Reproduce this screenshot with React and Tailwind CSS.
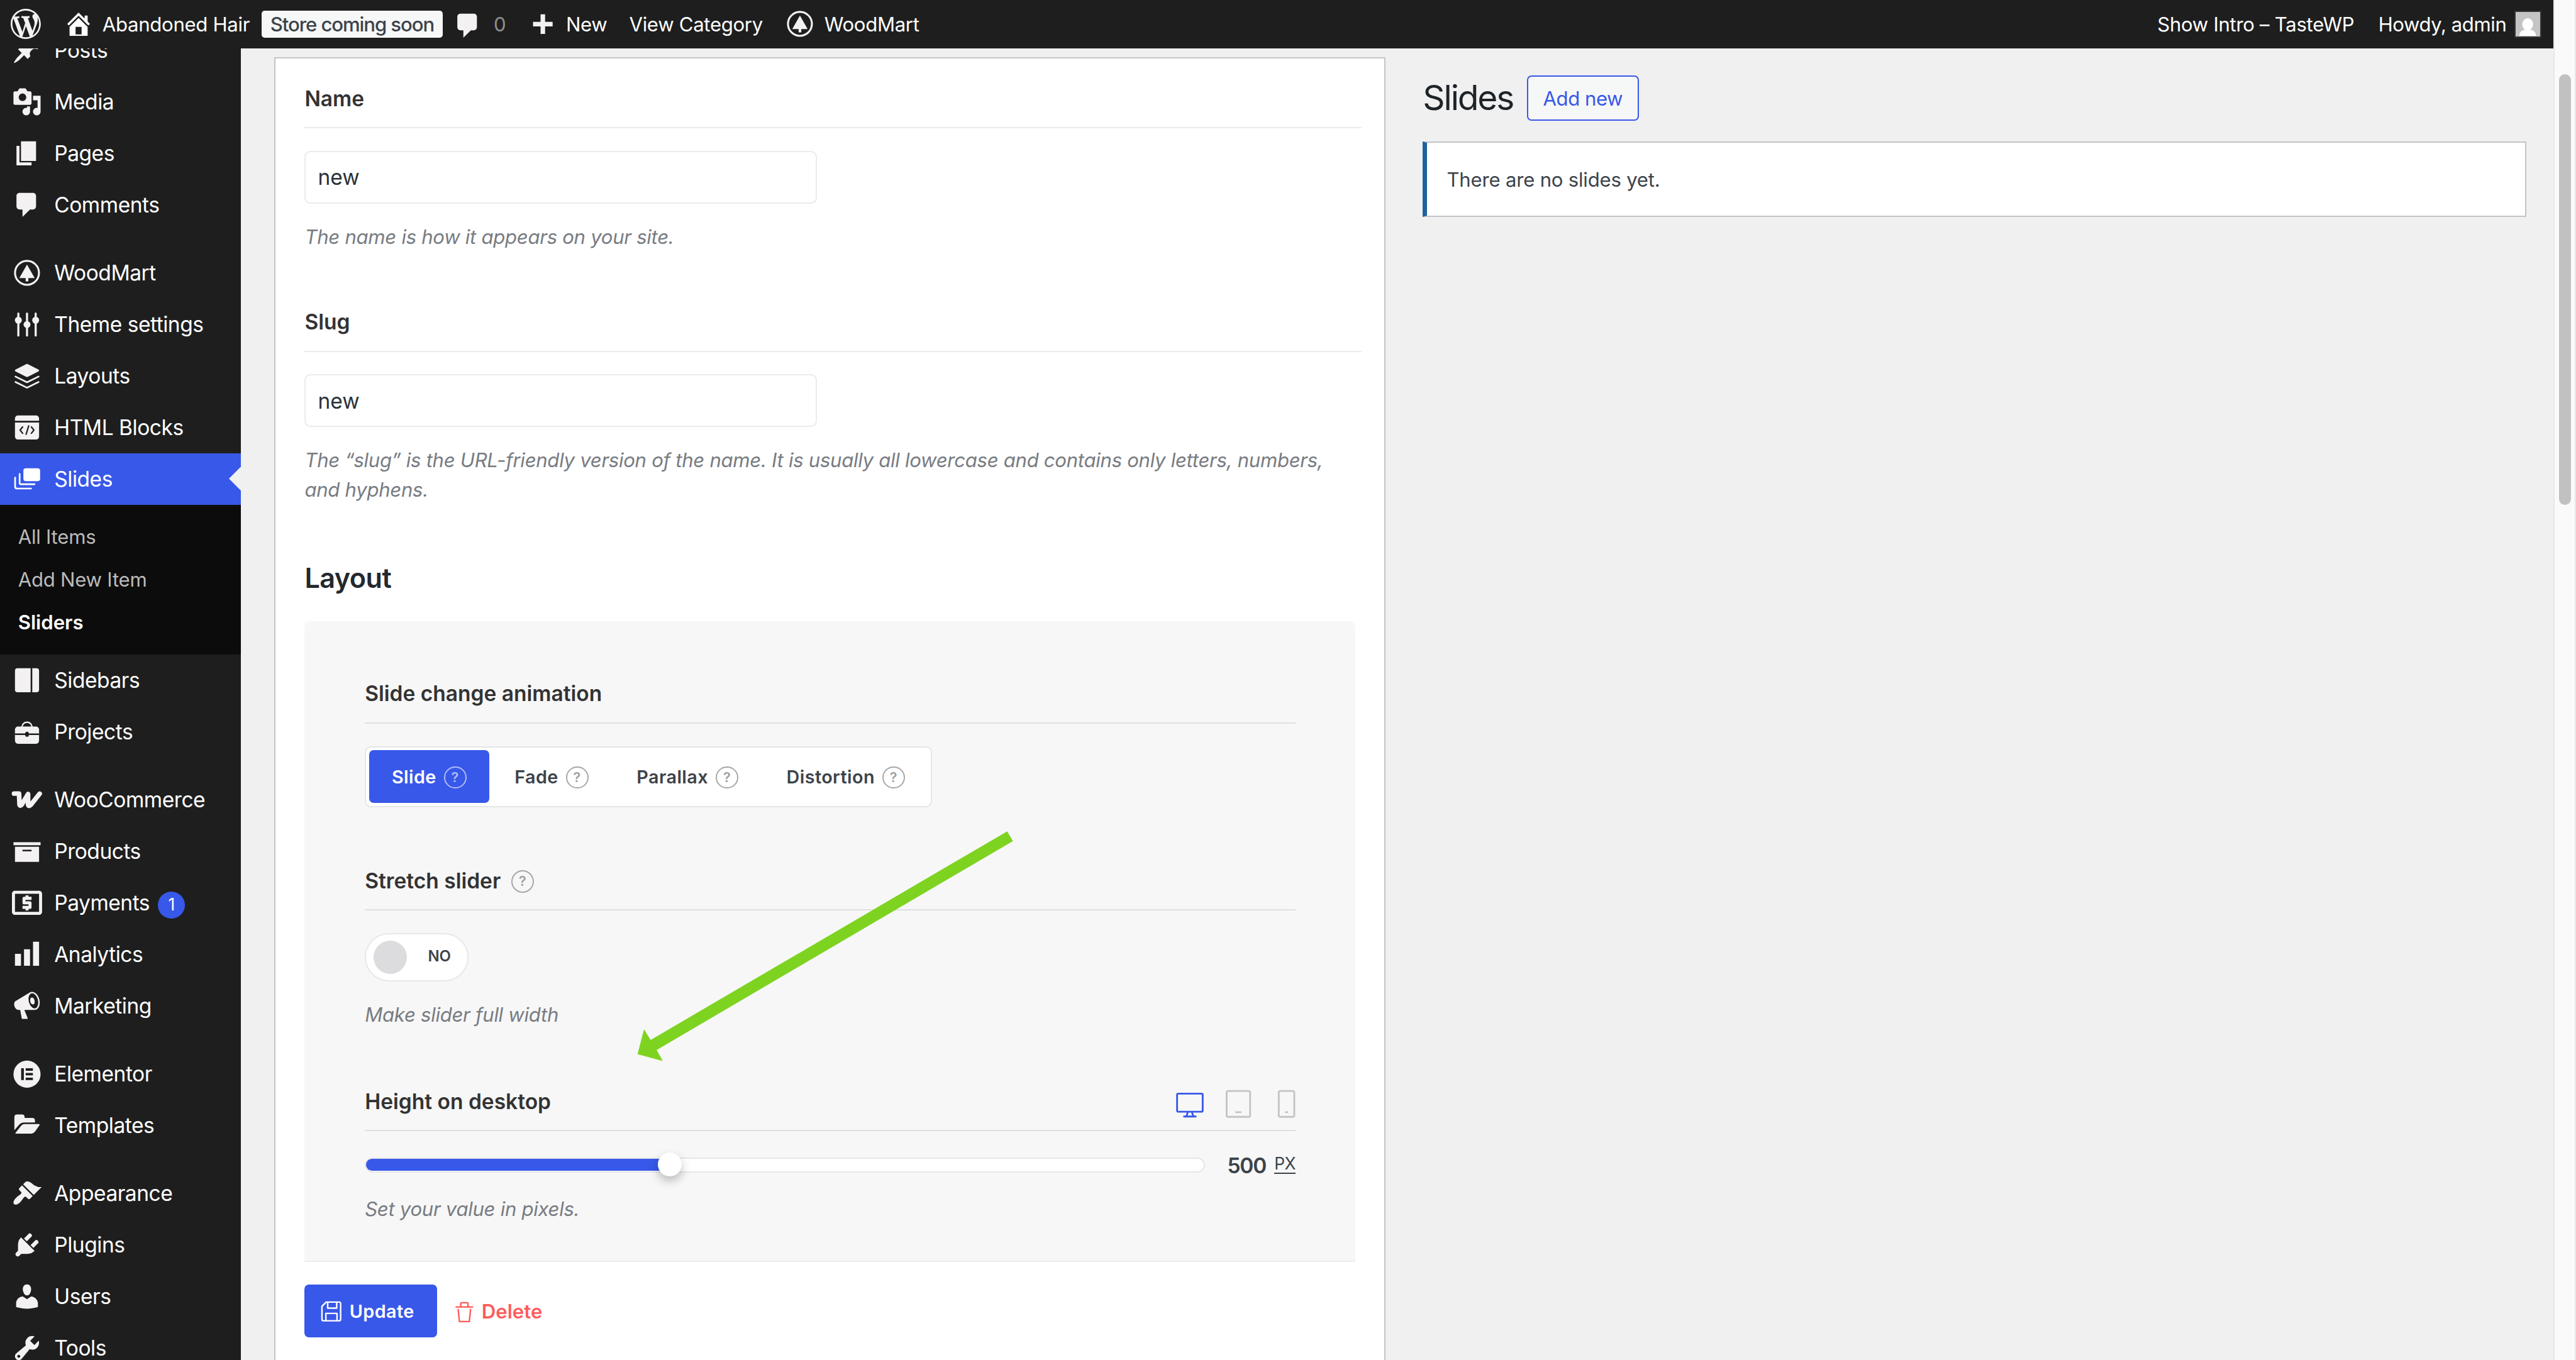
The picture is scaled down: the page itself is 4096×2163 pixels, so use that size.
import React from 'react'
import { MdLocalAtm } from 'react-icons/md'

const paths = {
  wordpress: 'M20 10c0-5.51-4.49-10-10-10C4.48 0 0 4.49 0 10c0 5.52 4.48 10 10 10 5.51 0 10-4.48 10-10zM7.78 15.37L4.37 6.22c.55-.02 1.17-.08 1.17-.08.5-.06.44-1.13-.06-1.11 0 0-1.45.11-2.37.11-.18 0-.37 0-.58-.01C4.12 2.69 6.87 1.11 10 1.11c2.33 0 4.45.87 6.05 2.34-.68-.11-1.65.39-1.65 1.58 0 .74.45 1.36.9 2.1.35.61.55 1.36.55 2.46 0 1.49-1.4 5-1.4 5l-3.03-8.37c.54-.02.82-.17.82-.17.5-.05.44-1.25-.06-1.22 0 0-1.44.12-2.38.12-.87 0-2.33-.12-2.33-.12-.5-.03-.56 1.2-.06 1.22l.92.08 1.26 3.41zM17.41 10c.24-.64.74-1.87.43-4.25.7 1.29 1.05 2.71 1.05 4.25 0 3.29-1.73 6.24-4.4 7.78.97-2.59 1.94-5.2 2.92-7.78zM6.1 18.09C3.12 16.65 1.11 13.53 1.11 10c0-1.3.23-2.48.72-3.59C3.25 10.3 4.67 14.2 6.1 18.09zm4.03-6.63l2.58 6.98c-.86.29-1.76.45-2.71.45-.79 0-1.57-.11-2.29-.33.81-2.38 1.62-4.74 2.42-7.1z',
  home: 'M16 8.5l1.53 1.53-1.06 1.06L10 4.6l-6.47 6.49-1.06-1.06L10 2.5l4 4v-2h2v4zm-6-2.46l6 5.99V18H4v-5.97zM12 17v-5H8v5h4z',
  post: 'M10.44 3.02l1.82-1.82 6.36 6.35-1.83 1.82c-1.05-.68-2.48-.57-3.41.36l-.75.75c-.92.93-1.04 2.35-.35 3.41l-1.83 1.82-2.41-2.41-2.8 2.79c-.42.42-3.38 2.71-3.8 2.29s1.86-3.39 2.28-3.81l2.79-2.79L4.1 9.36l1.83-1.82c1.05.69 2.48.57 3.4-.36l.75-.75c.93-.92 1.05-2.35.36-3.41z',
  media: 'M13 11V4c0-.55-.45-1-1-1h-1.67L9 1H5L3.67 3H2c-.55 0-1 .45-1 1v7c0 .55.45 1 1 1h10c.55 0 1-.45 1-1zM7 4.5c1.38 0 2.5 1.12 2.5 2.5S8.38 9.5 7 9.5 4.5 8.38 4.5 7 5.62 4.5 7 4.5zM14 6h5v10.5c0 1.38-1.12 2.5-2.5 2.5S14 17.88 14 16.5s1.12-2.5 2.5-2.5c.17 0 .34.02.5.05V9h-3V6zm-4 8.05V13h2v3.5c0 1.38-1.12 2.5-2.5 2.5S7 17.88 7 16.5 8.12 14 9.5 14c.17 0 .34.02.5.05z',
  page: 'M6 15V2h10v13H6zm-1 1h8v2H3V5h2v11z',
  comment: 'M5 2h9c1.1 0 2 .9 2 2v7c0 1.1-.9 2-2 2h-2l-5 5v-5H5c-1.1 0-2-.9-2-2V4c0-1.1.9-2 2-2z',
  plus: 'M17 7v3h-5v5H9v-5H4V7h5V2h3v5h5z',
  archive: 'M19 4v2H1V4h18zM2 7h16v10H2V7zm11 3V9H7v1h6z',
  chart: 'M18 18V2h-4v16h4zm-6 0V7H8v11h4zm-6 0v-8H2v8h4z',
  megaphone: 'M18.15 5.94c.46 1.62.38 3.22-.02 4.48-.42 1.28-1.26 2.18-2.3 2.48-.16.06-.26.06-.4.06-.06.02-.12.02-.18.02-.06.02-.14.02-.22.02h-6.8l2.22 5.5c.02.14-.06.26-.14.34-.08.1-.24.16-.34.16H6.95c-.1 0-.26-.06-.34-.16-.08-.08-.16-.2-.14-.34l-1-5.5H4.25l-.02-.02c-.5.06-1.08-.18-1.54-.62s-.88-1.08-1.06-1.88c-.24-.8-.2-1.56-.02-2.2.18-.62.58-1.08 1.06-1.3l.02-.02 9-5.4c.1-.06.18-.1.24-.16.06-.04.14-.08.24-.12.16-.08.28-.12.5-.18 1.04-.3 2.24.1 3.22.98s1.84 2.24 2.26 3.86zm-2.58 5.98h-.02c.4-.1.74-.34 1.04-.7.58-.7.86-1.76.86-3.04 0-.64-.1-1.3-.28-1.98-.34-1.36-1.02-2.5-1.78-3.24s-1.68-1.1-2.46-.88c-.82.22-1.4.96-1.7 2-.32 1.04-.28 2.36.06 3.72.38 1.36 1 2.5 1.8 3.24.78.74 1.62 1.1 2.48.88zm-2.54-7.08c.22-.04.42-.02.62.04.38.16.76.48 1.02 1s.42 1.2.42 1.78c0 .3-.04.56-.12.8-.18.48-.44.84-.86.94-.34.1-.8-.06-1.14-.4s-.64-.86-.78-1.5c-.18-.62-.12-1.24.02-1.72s.48-.84.82-.94z',
  appearance: 'M14.48 11.06L7.41 3.99l1.5-1.5c.5-.56 2.3-.47 3.51.32 1.21.8 1.43 1.28 2.91 2.1 1.18.64 2.45 1.26 4.45.85zm-.71.71L6.7 4.7 4.93 6.47c-.39.39-.39 1.02 0 1.41l1.06 1.06c.39.39.39 1.03 0 1.42-.6.6-1.43 1.11-2.21 1.69-.35.26-.7.53-1.01.84C1.43 14.23.4 16.08 1.4 17.07c.99 1 2.84-.03 4.18-1.36.31-.31.58-.66.85-1.02.57-.78 1.08-1.61 1.69-2.21.39-.39 1.02-.39 1.41 0l1.06 1.06c.39.39 1.02.39 1.41 0z',
  plugins: 'M13.11 4.36L9.87 7.6 8 5.73l3.24-3.24c.35-.34 1.05-.2 1.56.32.52.51.66 1.21.31 1.55zm-8 1.77l.91-1.12 9.01 9.01-1.19.84c-.71.71-2.63 1.16-3.82 1.16H6.14L4.9 17.26c-.59.59-1.54.59-2.12 0-.59-.58-.59-1.53 0-2.12l1.24-1.24v-3.88c0-1.13.4-3.19 1.09-3.89zm7.26 3.97l3.24-3.24c.34-.35 1.04-.21 1.55.31.52.51.66 1.21.31 1.55l-3.24 3.25z',
  users: 'M10 9.25c-2.27 0-2.73-3.44-2.73-3.44C7 4.02 7.82 2 9.97 2c2.16 0 2.98 2.02 2.71 3.81 0 0-.41 3.44-2.68 3.44zm0 2.57L12.72 10c2.39 0 4.52 2.33 4.52 4.53v2.49s-3.65 1.13-7.24 1.13c-3.65 0-7.24-1.13-7.24-1.13v-2.49c0-2.25 1.94-4.48 4.47-4.48z',
  tools: 'M16.68 9.77c-1.34 1.34-3.3 1.67-4.95.99l-5.41 6.52c-.99.99-2.59.99-3.58 0s-.99-2.59 0-3.57l6.52-5.42c-.68-1.65-.35-3.61.99-4.95 1.28-1.28 3.12-1.62 4.72-1.06l-2.89 2.89 2.82 2.82 2.86-2.87c.53 1.58.18 3.39-1.08 4.65zM3.81 16.21c.4.39 1.04.39 1.43 0 .4-.4.4-1.04 0-1.43-.39-.4-1.03-.4-1.43 0-.39.39-.39 1.03 0 1.43z',
}

function Svg({ children }) {
  return (
    <svg viewBox="0 0 20 20" className="block size-5 shrink-0 overflow-visible" fill="currentColor">
      {children}
    </svg>
  )
}

function Dash({ name }) {
  return <Svg><path d={paths[name]} /></Svg>
}

function TreeIcon() {
  return (
    <Svg>
      <circle cx="10" cy="10" r="7.95" fill="none" stroke="currentColor" strokeWidth="1.3" />
      <path d="M10 4.5l5.1 9h-4.2v2.2H9.1v-2.2H4.9z" />
    </Svg>
  )
}

function SlidersIcon() {
  return (
    <Svg>
      <path d="M4.25 2.8v14.6M10 2.8v14.6M15.75 2.8v14.6" stroke="currentColor" strokeWidth="1.4" strokeLinecap="round" />
      <circle cx="4.25" cy="7.2" r="2.3" />
      <circle cx="10" cy="10.1" r="2.3" />
      <circle cx="15.75" cy="7.2" r="2.3" />
    </Svg>
  )
}

function LayersIcon() {
  return (
    <Svg>
      <path d="M9.4 2.2q.6-.35 1.2 0l7 3.5q.9.6 0 1.3l-7 3.5q-.6.35-1.2 0l-7-3.5q-.9-.7 0-1.3z" />
      <path d="M2.3 10.4l7.7 3.8 7.7-3.8M2.3 14l7.7 3.8 7.7-3.8" fill="none" stroke="currentColor" strokeWidth="1.1" strokeLinecap="round" strokeLinejoin="round" />
    </Svg>
  )
}

function HtmlIcon() {
  return (
    <Svg>
      <path d="M4 2h12a2 2 0 0 1 2 2v1.5H2V4a2 2 0 0 1 2-2zM2 6.7h16V16a2 2 0 0 1-2 2H4a2 2 0 0 1-2-2z" />
      <path d="M7.1 9.6L5.4 11.7l1.7 2.1M12.9 9.6l1.7 2.1-1.7 2.1M11.1 8.9l-1.7 5.6" fill="none" stroke="#1e1e1e" strokeWidth="0.9" strokeLinecap="round" strokeLinejoin="round" />
    </Svg>
  )
}

function SlidesIcon() {
  return (
    <Svg>
      <rect x="7.6" y="2.8" width="11.1" height="8.6" rx="1.7" />
      <path d="M5.1 6.6v5.9q0 .9.9.9h9M2.1 9v6q0 1.3 1.3 1.3h9.3" fill="none" stroke="currentColor" strokeWidth="1.1" strokeLinecap="round" />
    </Svg>
  )
}

function SidebarsIcon() {
  return (
    <Svg>
      <path d="M3.7 2h8.7v16H3.7A1.7 1.7 0 0 1 2 16.3V3.7A1.7 1.7 0 0 1 3.7 2zM13.5 2h2.8A1.7 1.7 0 0 1 18 3.7v12.6a1.7 1.7 0 0 1-1.7 1.7h-2.8z" />
    </Svg>
  )
}

function CaseIcon() {
  return (
    <Svg>
      <path d="M6.6 6.8C7 4.8 8.3 3.6 10 3.6s3 1.2 3.4 3.2" fill="none" stroke="currentColor" strokeWidth="0.9" />
      <rect x="2" y="6.5" width="16" height="11.4" rx="2" />
      <path d="M2 11.6h16" stroke="#1e1e1e" strokeWidth="1.1" />
      <rect x="8.8" y="9.9" width="2.4" height="3.4" rx="1.2" fill="#1e1e1e" />
    </Svg>
  )
}

function WooIcon() {
  return (
    <Svg>
      <path d="M1.4 5.9h3.3l.3 7.2q.3 1.5 1.4.3l4.3-7.2v7q.3 1.6 1.7.3L18.4 6" fill="none" stroke="currentColor" strokeWidth="3.1" strokeLinecap="round" strokeLinejoin="round" />
    </Svg>
  )
}

function PaymentsIcon() {
  return <MdLocalAtm viewBox="2 2 20 20" className="block size-5 shrink-0" />
}

function ElementorIcon() {
  return (
    <Svg>
      <circle cx="10" cy="10.2" r="9" />
      <path d="M6.1 6.3h1.8v7.8H6.1zM9.1 6.3h4.8v1.6H9.1zM9.1 9.4h4.8V11H9.1zM9.1 12.5h4.8v1.6H9.1z" fill="#1e1e1e" />
    </Svg>
  )
}

function FolderIcon() {
  return (
    <Svg>
      <path d="M1.6 13.2V4.4q0-1.7 1.7-1.7h3.4q1.7 0 1.7 1.7V5h5.2q1.7 0 1.7 1.8V8H8q-2 0-3.2 1.5z" />
      <path d="M2.3 15q3.1-4 4.2-5.2.7-.7 1.8-.7h9.5q.9 0 .5.7l-3 4.3q-1 1.3-2.4 1.3H2.7q-.6 0-.4-.4z" />
    </Svg>
  )
}

const menuTop = [
  ['Posts', <Dash name="post" />],
  ['Media', <Dash name="media" />],
  ['Pages', <Dash name="page" />],
  ['Comments', <Dash name="comment" />],
]

const menuTheme = [
  ['WoodMart', <TreeIcon />],
  ['Theme settings', <SlidersIcon />],
  ['Layouts', <LayersIcon />],
  ['HTML Blocks', <HtmlIcon />],
]

const menuAfter = [
  ['Sidebars', <SidebarsIcon />],
  ['Projects', <CaseIcon />],
]

const menuShop = [
  ['WooCommerce', <WooIcon />],
  ['Products', <Dash name="archive" />],
  ['Payments', <PaymentsIcon />, 1],
  ['Analytics', <Dash name="chart" />],
  ['Marketing', <Dash name="megaphone" />],
]

const menuBuilder = [
  ['Elementor', <ElementorIcon />],
  ['Templates', <FolderIcon />],
]

const menuSystem = [
  ['Appearance', <Dash name="appearance" />],
  ['Plugins', <Dash name="plugins" />],
  ['Users', <Dash name="users" />],
  ['Tools', <Dash name="tools" />],
]

function MenuItem({ label, icon, count, active }) {
  return (
    <li className={active ? 'relative flex h-[34.2px] items-center bg-[#3858e9] text-white' : 'flex h-[34.2px] items-center text-[#f3f1f1]'}>
      <span className="flex w-9 justify-center">{icon}</span>
      <span className="pt-px text-sm tracking-[-0.014em] text-white">{label}</span>
      {count && (
        <span className="mt-[3px] ml-[5.5px] flex size-[18px] items-center justify-center rounded-full bg-[#3858e9] text-[11px] text-white">{count}</span>
      )}
      {active && (
        <svg viewBox="0 0 8 16" className="absolute top-[9px] right-0 h-4 w-2" fill="#f0f0f1"><path d="M8 0v16L0 8z" /></svg>
      )}
    </li>
  )
}

function MenuGroup({ items }) {
  return (
    <ul>
      {items.map(([label, icon, count]) => (
        <MenuItem key={label} label={label} icon={icon} count={count} />
      ))}
    </ul>
  )
}

function Sidebar() {
  return (
    <nav className="w-40 shrink-0 overflow-hidden bg-[#1e1e1e]">
      <div className="-mt-[15.6px]">
        <MenuGroup items={menuTop} />
        <div className="h-[11px]" />
        <MenuGroup items={menuTheme} />
        <ul>
          <MenuItem label="Slides" icon={<SlidesIcon />} active />
        </ul>
        <ul className="bg-[#0c0c0c] pt-[7.8px] pb-[6.9px] pl-3 text-[13px] leading-[28.2px] tracking-[-0.008em] text-[#bbbbbb]">
          <li>All Items</li>
          <li>Add New Item</li>
          <li className="font-semibold tracking-normal text-white">Sliders</li>
        </ul>
        <MenuGroup items={menuAfter} />
        <div className="h-[11px]" />
        <MenuGroup items={menuShop} />
        <div className="h-[11px]" />
        <MenuGroup items={menuBuilder} />
        <div className="h-[11px]" />
        <MenuGroup items={menuSystem} />
      </div>
    </nav>
  )
}

function AdminBar() {
  return (
    <header className="flex h-8 w-[1695px] shrink-0 items-center bg-[#1e1e1e] pl-[7px] text-[13px] tracking-[-0.01em] text-[#f3f1f1]">
      <Dash name="wordpress" />
      <div className="ml-[15px] flex w-[131.5px] items-center gap-[6px] text-white">
        <Dash name="home" />
        <span className="pt-px">Abandoned Hair</span>
      </div>
      <div className="flex h-[18px] w-[120.5px] items-center justify-center rounded-xs bg-[#f6f7f7] pt-px font-medium tracking-[-0.035em] text-[#3c434a]">Store coming soon</div>
      <div className="ml-[6.7px] flex w-[49px] items-center gap-[7px] text-[#8f8f8f]">
        <span className="mt-[2px] text-[#f3f1f1]"><Dash name="comment" /></span>
        <span className="pt-px">0</span>
      </div>
      <div className="flex w-[68px] items-center gap-[6px]">
        <span className="mt-[3px]"><Dash name="plus" /></span>
        <span className="pt-px text-white">New</span>
      </div>
      <span className="w-[103.5px] pt-px text-white">View Category</span>
      <div className="flex items-center gap-[6px]">
        <TreeIcon />
        <span className="pt-px text-white">WoodMart</span>
      </div>
      <div className="ml-auto flex items-center pr-2 text-white">
        <span className="mr-4 pt-px">Show Intro – TasteWP</span>
        <span className="mr-[5.2px] pt-px tracking-[-0.014em]">Howdy, admin</span>
        <span className="size-[18px] border border-[#333] bg-[#c4c4c4]">
          <svg viewBox="0 0 16 16" className="size-4" fill="#fff">
            <ellipse cx="8" cy="8.2" rx="3.6" ry="4" />
            <path d="M2.4 16c.2-2.6 1.6-3.8 3.4-4.1h4.4c1.8.3 3.2 1.5 3.4 4.1z" />
          </svg>
        </span>
      </div>
    </header>
  )
}

function Help({ light }) {
  return (
    <span className={light
      ? 'flex size-[15px] items-center justify-center rounded-full border border-[#afbcf6] text-[9px] font-semibold text-[#afbcf6]'
      : 'flex size-[15px] items-center justify-center rounded-full border border-[#a7a7a7] text-[9px] font-semibold text-[#a0a0a0]'}>?</span>
  )
}

function Title({ children, dark }) {
  return (
    <div className={dark
      ? 'flex h-[30px] items-start border-b border-[#e0e0e0] pt-[0.7px] text-sm leading-5 font-semibold text-[#333]'
      : 'flex h-[30px] items-start border-b border-[#ebebeb] pt-[0.7px] text-sm leading-5 font-semibold text-[#333]'}>
      {children}
    </div>
  )
}

function Note({ children }) {
  return <p className="-mb-[0.6px] pt-[0.6px] text-[13px] leading-[19.5px] tracking-[-0.0095em] text-[#787c82] italic">{children}</p>
}

function TextField({ label, note }) {
  return (
    <div>
      <Title>{label}</Title>
      <div className="mt-[15px] mb-3 flex h-[35px] w-[340px] items-center rounded border border-[#ebebeb] px-2 pt-px text-sm text-[#2c3338]">new</div>
      <Note>{note}</Note>
    </div>
  )
}

function Segment({ label, active }) {
  return (
    <span className={active
      ? 'flex h-[35px] items-center gap-[5px] rounded-[3px] bg-[#3858e9] px-[15px] pt-px text-white'
      : 'flex h-[35px] items-center gap-[5px] rounded-[3px] px-[15px] pt-px text-[#3c434a]'}>
      {label}
      <Help light={active} />
    </span>
  )
}

function LayoutPanel() {
  return (
    <section className="w-[697.6px] rounded-t border-b border-[#ebebeb] bg-[#f7f7f7] px-10 pt-[38px] pb-[25px]">
      <Title dark>Slide change animation</Title>
      <div className="mt-[15px] mb-[38.5px] flex w-max gap-0.5 rounded border border-[#e6e6e6] bg-white p-0.5 text-xs font-semibold tracking-[0.015em]">
        <Segment label="Slide" active />
        <Segment label="Fade" />
        <Segment label="Parallax" />
        <Segment label="Distortion" />
      </div>

      <Title dark>
        <span className="mr-[7px]">Stretch slider</span>
        <span className="mt-[2.5px]"><Help /></span>
      </Title>
      <div className="mt-[15px] mb-3 flex h-8 w-[69px] items-center rounded-full border border-[#e8e8e8] bg-white pl-[5px]">
        <span className="size-[22px] rounded-full bg-[#dcdcde]" />
        <span className="-mt-px ml-[14px] text-[10px] font-semibold text-[#3c434a]">NO</span>
      </div>
      <Note>Make slider full width</Note>

      <div className="mt-[38px]">
        <Title dark>
          <span>Height on desktop</span>
          <svg viewBox="0 0 80 20" className="mt-[1px] -mr-[0.5px] ml-auto h-5 w-20 overflow-visible" fill="none" strokeWidth="1.2" strokeLinejoin="round">
            <g stroke="#3858e9">
              <rect x="1.1" y="3.5" width="17" height="12" rx=".7" />
              <path d="M8.3 15.6l-1 2.9M10.9 15.6l1 2.9M5.7 18.7h7.8" strokeLinecap="round" />
            </g>
            <g stroke="#c3c4c7">
              <rect x="34" y="1.7" width="15.6" height="17.2" rx="1" />
              <path d="M40.2 15.8h3.2" strokeLinecap="round" />
              <rect x="68.6" y="1.7" width="10.3" height="17.2" rx="1" />
              <path d="M73.2 15.8h1.1" strokeLinecap="round" />
            </g>
          </svg>
        </Title>
      </div>
      <div className="mt-[12.4px] mb-[9.1px] flex h-[20px] items-center">
        <div className="relative h-2.5 w-[557.7px] rounded-full border border-[#e6e6e6] bg-white">
          <div className="h-2 w-[202px] rounded-l-full bg-[#3858e9]" />
          <span className="absolute -top-1 left-[193.5px] size-4 rounded-full bg-white shadow-[0_3px_6px_rgba(0,0,0,0.25)]" />
        </div>
        <span className="ml-auto pt-[1.6px] text-sm font-semibold tracking-[-0.035em] text-[#3c434a]">500</span>
        <span className="mb-[1px] ml-[5.5px] border-b border-[#3c434a] text-[11px] leading-[12px] tracking-[-0.03em] text-[#3c434a]">PX</span>
      </div>
      <Note>Set your value in pixels.</Note>
    </section>
  )
}

function SliderForm() {
  return (
    <div className="mt-1.5 ml-[22.2px] flex w-[737.4px] flex-col border border-b-0 border-[#c3c4c7] bg-white pt-[16.3px] pr-[14.8px] pl-[19.2px]">
      <TextField label="Name" note="The name is how it appears on your site." />
      <div className="mt-[37px]">
        <TextField label="Slug" note="The “slug” is the URL-friendly version of the name. It is usually all lowercase and contains only letters, numbers, and hyphens." />
      </div>
      <h2 className="mt-[37.5px] mb-[16.3px] text-lg leading-6 font-semibold tracking-[-0.012em] text-[#23282d]">Layout</h2>
      <LayoutPanel />
      <div className="mt-[15px] flex items-center gap-3 font-semibold">
        <button className="flex h-[35px] w-[88px] items-center gap-[5px] rounded-[3px] bg-[#3858e9] pt-px pl-[10.8px] text-xs tracking-[0.015em] text-white">
          <svg viewBox="0 0 14 14" className="size-3.5" fill="none" stroke="currentColor" strokeWidth="1" strokeLinejoin="round">
            <path d="M3.6.8h8.6q1 0 1 1v10.4q0 1-1 1H1.8q-1 0-1-1V3.6z" />
            <path d="M4.6.8v4h6v-4M3.4 13.2V8.3h7.4v4.9" />
          </svg>
          Update
        </button>
        <button className="flex items-center gap-[5.5px] pt-px text-[13px] text-[#ff5b5b]">
          <svg viewBox="0 0 12 14" className="mt-px h-3.5 w-3" fill="none" stroke="currentColor" strokeWidth="1" strokeLinejoin="round" strokeLinecap="round">
            <path d="M.5 3.6h11M3.6 3.4V1.5q0-.7.7-.7h3.4q.7 0 .7.7v1.9M1.9 5.3l.8 8h6.6l.8-8" />
          </svg>
          Delete
        </button>
      </div>
    </div>
  )
}

function SlidesColumn() {
  return (
    <div className="mt-[18px] ml-[24.9px] flex w-[732.6px] flex-col">
      <div className="flex items-center gap-[9px]">
        <h1 className="text-[23px] leading-[30px] tracking-[-0.04em] text-[#1d2327]">Slides</h1>
        <button className="flex h-[30px] w-[74.5px] items-center justify-center rounded-[3px] border border-[#3858e9] bg-[#f6f7f7] pt-px text-[13px] tracking-[-0.015em] text-[#3858e9]">Add new</button>
      </div>
      <div className="mt-3.5 flex h-[50px] items-center border border-l-3 border-[#c3c4c7] border-l-[#1f629b] bg-white pt-px pl-[13px] text-[13px] tracking-[-0.007em] text-[#3c434a]">There are no slides yet.</div>
    </div>
  )
}

export default function App() {
  return (
    <div className="relative flex h-[903px] w-[1710px] overflow-hidden bg-[#f0f0f1] font-['Inter','Liberation_Sans',sans-serif] leading-normal [zoom:2.39532]">
      <div className="flex w-[1695px] flex-col">
        <AdminBar />
        <div className="flex min-h-0 grow">
          <Sidebar />
          <SliderForm />
          <SlidesColumn />
        </div>
      </div>
      <div className="w-[15px] border-x border-[#e8e8e8] bg-[#fafafa] pt-[49.3px] pl-[3px]">
        <div className="h-[286px] w-2 rounded-full bg-[#c1c1c1]" />
      </div>

      {/* arrow pointing at the height control */}
      <svg viewBox="423 551 250 154" className="absolute top-[551px] left-[423px] h-[154px] w-[250px]" fill="#7ed321">
        <path d="M423.3 699.9L427.6 683.3L432 690.4L668.7 551.9L672.5 558.4L436 697.1L440.1 704.4Z" />
      </svg>
    </div>
  )
}
